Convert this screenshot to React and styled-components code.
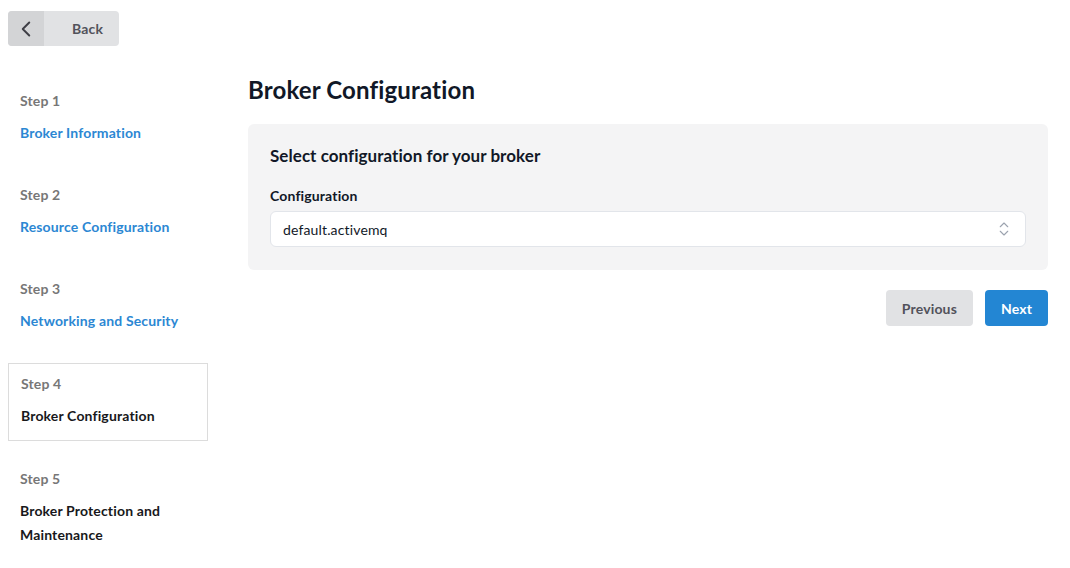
import styled, { createGlobalStyle } from "styled-components";
import { ChevronLeft, ChevronsUpDown } from "lucide-react";

const GlobalStyle = createGlobalStyle`
  * { box-sizing: border-box; }
  body {
    margin: 0;
    background: #ffffff;
    font-family: Lato, "Noto Sans", sans-serif;
    letter-spacing: 0.15px;
    color: #111827;
  }
`;

const steps = [
  { label: "Step 1", title: "Broker Information", state: "done" },
  { label: "Step 2", title: "Resource Configuration", state: "done" },
  { label: "Step 3", title: "Networking and Security", state: "done" },
  { label: "Step 4", title: "Broker Configuration", state: "current" },
  { label: "Step 5", title: "Broker Protection and Maintenance", state: "todo" },
];

export default function App() {
  return (
    <Page>
      <GlobalStyle />
      <BackButton type="button">
        <BackIcon>
          <ChevronLeft size={26} strokeWidth={1.8} />
        </BackIcon>
        <BackLabel>Back</BackLabel>
      </BackButton>
      <Layout>
        <StepList>
          {steps.map((s) => (
            <StepItem key={s.label} $current={s.state === "current"}>
              <StepLabel>{s.label}</StepLabel>
              <StepTitle $state={s.state}>{s.title}</StepTitle>
            </StepItem>
          ))}
        </StepList>
        <Main>
          <Heading>Broker Configuration</Heading>
          <Panel>
            <PanelTitle>Select configuration for your broker</PanelTitle>
            <FieldLabel>Configuration</FieldLabel>
            <Select>
              <span>default.activemq</span>
              <ChevronsUpDown size={18} strokeWidth={1.5} color="#9ca3af" />
            </Select>
          </Panel>
          <Actions>
            <Button type="button">Previous</Button>
            <Button type="button" $primary>
              Next
            </Button>
          </Actions>
        </Main>
      </Layout>
    </Page>
  );
}

const Page = styled.div`
  padding: 11px 22px 20px 8px;
`;

const BackButton = styled.button`
  display: flex;
  align-items: stretch;
  height: 35px;
  width: 111px;
  padding: 0;
  border: none;
  border-radius: 4px;
  overflow: hidden;
  background: #e1e2e4;
  font-family: inherit;
  letter-spacing: inherit;
  cursor: pointer;
`;

const BackIcon = styled.span`
  display: flex;
  align-items: center;
  justify-content: center;
  width: 36px;
  background: #d3d4d6;
  color: #3f3f46;
`;

const BackLabel = styled.span`
  flex: 1;
  display: flex;
  align-items: center;
  padding-left: 28px;
  font-size: 14px;
  font-weight: 700;
  color: #52525b;
`;

const Layout = styled.div`
  display: grid;
  grid-template-columns: 200px 1fr;
  gap: 40px;
  margin-top: 28px;
`;

const StepList = styled.nav`
  display: flex;
  flex-direction: column;
  gap: 18px;
  padding-top: 7px;
`;

const StepItem = styled.div`
  display: flex;
  flex-direction: column;
  gap: 8px;
  padding: 8px 12px 12px;
  border: ${(p) => (p.$current ? "1px solid #dcdcdc" : "none")};
`;

const StepLabel = styled.span`
  font-size: 14px;
  line-height: 24px;
  font-weight: 700;
  color: #777777;
`;

const StepTitle = styled.span`
  font-size: 14px;
  line-height: 24px;
  font-weight: 700;
  color: ${(p) => (p.$state === "done" ? "#2c87d3" : "#18181b")};
`;

const Main = styled.main`
  display: flex;
  flex-direction: column;
`;

const Heading = styled.h1`
  margin: 0 0 18px;
  font-size: 24px;
  line-height: 32px;
  font-weight: 700;
  color: #111827;
`;

const Panel = styled.section`
  display: flex;
  flex-direction: column;
  padding: 19px 22px 23px;
  background: #f4f4f5;
  border-radius: 6px;
`;

const PanelTitle = styled.h2`
  margin: 0 0 17px;
  font-size: 17px;
  line-height: 26px;
  font-weight: 700;
  letter-spacing: 0.05px;
  color: #111827;
`;

const FieldLabel = styled.label`
  margin-bottom: 5px;
  font-size: 14px;
  line-height: 20px;
  font-weight: 700;
  color: #111827;
`;

const Select = styled.div`
  display: flex;
  align-items: center;
  justify-content: space-between;
  height: 36px;
  padding: 0 12px 0 12px;
  background: #ffffff;
  border: 1px solid #e2e5ea;
  border-radius: 6px;
  font-size: 14px;
  color: #111827;
`;

const Actions = styled.div`
  display: flex;
  justify-content: flex-end;
  gap: 12px;
  margin-top: 20px;
`;

const Button = styled.button`
  height: 36px;
  padding: 0 16px;
  border: none;
  border-radius: 4px;
  font-family: inherit;
  letter-spacing: inherit;
  font-size: 14px;
  font-weight: 700;
  background: ${(p) => (p.$primary ? "#2386d3" : "#e1e2e4")};
  color: ${(p) => (p.$primary ? "#ffffff" : "#52525b")};
  cursor: pointer;
`;
